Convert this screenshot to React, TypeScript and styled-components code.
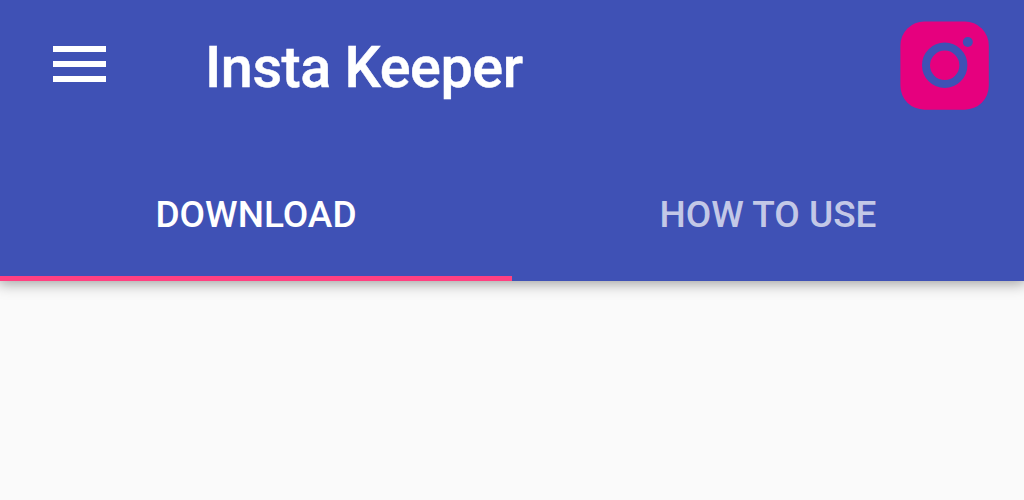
import React, { useState } from "react";
import styled, { createGlobalStyle } from "styled-components";

const tabs = ["Download", "How to use"];

const App = () => {
  const [active, setActive] = useState(0);

  return (
    <Screen>
      <GlobalStyle />
      <Header>
        <Toolbar>
          <MenuButton aria-label="Menu">
            <Bar />
            <Bar />
            <Bar />
          </MenuButton>
          <Title>Insta Keeper</Title>
          <Logo viewBox="0 0 90 90">
            <rect x="0.4" y="0.5" width="88.4" height="88.2" rx="24" fill="#e6007e" />
            <circle cx="44.7" cy="44.3" r="18.7" fill="none" stroke="#3f51b5" strokeWidth="8" />
            <circle cx="67.8" cy="21" r="5" fill="#3f51b5" />
          </Logo>
        </Toolbar>
        <Tabs>
          {tabs.map((tab, i) => (
            <Tab key={tab} $active={i === active} onClick={() => setActive(i)}>
              {tab}
            </Tab>
          ))}
        </Tabs>
      </Header>
    </Screen>
  );
};

export default App;

const GlobalStyle = createGlobalStyle`
  body {
    margin: 0;
    background: #fafafa;
  }
`;
const Screen = styled.div`
  height: 500px;
  overflow: hidden;
  background: #fafafa;
  font-family: Roboto, sans-serif;
`;
const Header = styled.header`
  height: 281px;
  display: flex;
  flex-direction: column;
  background: #3f51b5;
  box-shadow: 0 0 14px 2px rgba(0, 0, 0, 0.4);
`;
const Toolbar = styled.div`
  height: 132px;
  box-sizing: border-box;
  padding: 0 34px 0 53px;
  display: flex;
  align-items: center;
`;
const MenuButton = styled.button`
  width: 53px;
  height: 36px;
  margin-bottom: 4px;
  padding: 0;
  border: 0;
  background: none;
  display: flex;
  flex-direction: column;
  justify-content: space-between;
`;
const Bar = styled.span`
  width: 100%;
  height: 6px;
  background: #fff;
`;
const Title = styled.h1`
  margin: 4px 0 0 99px;
  flex: 1;
  color: #fff;
  font-size: 57.5px;
  font-weight: 500;
  line-height: 70px;
  letter-spacing: -0.45px;
  -webkit-text-stroke: 0.5px #fff;
  white-space: nowrap;
`;
const Logo = styled.svg`
  width: 90px;
  height: 90px;
`;
const Tabs = styled.nav`
  flex: 1;
  display: flex;
`;
const Tab = styled.button<{ $active: boolean }>`
  flex: 1;
  padding: 20px 0 0;
  border: 0;
  border-bottom: 5px solid ${(p) => (p.$active ? "#ff4081" : "transparent")};
  background: none;
  color: ${(p) => (p.$active ? "#fff" : "rgba(255, 255, 255, 0.7)")};
  font-family: inherit;
  font-size: 37px;
  font-weight: 500;
  text-transform: uppercase;
`;
